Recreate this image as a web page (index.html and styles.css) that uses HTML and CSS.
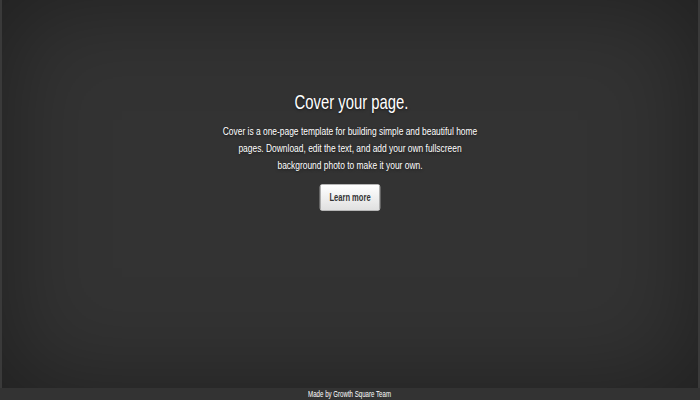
FILE: index.html
```html
<!DOCTYPE html>
<html>
<head>
<meta charset="utf-8">
<link rel="stylesheet" href="styles.css">
</head>
<body>
<div class="site">
  <main class="cover">
    <div class="inner">
      <h1 class="heading">Cover your page.</h1>
      <p class="lead">Cover is a one-page template for building simple and beautiful home pages. Download, edit the text, and add your own fullscreen background photo to make it your own.</p>
      <a class="btn" href="#">Learn more</a>
    </div>
  </main>
  <footer class="footer"><span class="credit">Made by Growth Square Team</span></footer>
</div>
</body>
</html>
```
FILE: styles.css
```css
html, body {
  margin: 0;
  padding: 0;
  height: 100%;
}
body {
  background: #333;
  color: #fff;
  font-family: "Liberation Sans", Arial, sans-serif;
}
.site {
  height: 400px;
  display: flex;
  flex-direction: column;
}
.cover {
  flex: 1;
  display: flex;
  justify-content: center;
  box-shadow: inset 0 0 100px rgba(0,0,0,.4);
  border-left: 2px solid #3a3a3a;
  border-right: 2px solid #3a3a3a;
}
.inner {
  width: 500px;
  text-align: center;
  transform: scaleX(0.72);
  padding-top: 87px;
}
.heading {
  margin: 0 0 0 4px;
  font-size: 20.6px;
  font-weight: normal;
  line-height: 30px;
  text-shadow: 0 1px 3px rgba(0,0,0,.5);
}
.lead {
  width: 368px;
  margin: 5px auto 0;
  font-size: 11.7px;
  line-height: 17px;
  text-shadow: 0 1px 3px rgba(0,0,0,.5);
}
.btn {
  display: inline-block;
  margin-top: 11px;
  padding: 0 12px;
  height: 25px;
  line-height: 25px;
  font-size: 10.5px;
  font-weight: bold;
  color: #333;
  text-decoration: none;
  border-radius: 3px;
  background: linear-gradient(#fff, #e0e0e0);
  border: 1px solid #ccc;
}
.footer {
  height: 12px;
  background: #333;
  text-align: center;
  font-size: 8.5px;
  line-height: 12px;
  color: #fff;
}
.credit {
  display: inline-block;
  transform: scaleX(0.72);
}
```
